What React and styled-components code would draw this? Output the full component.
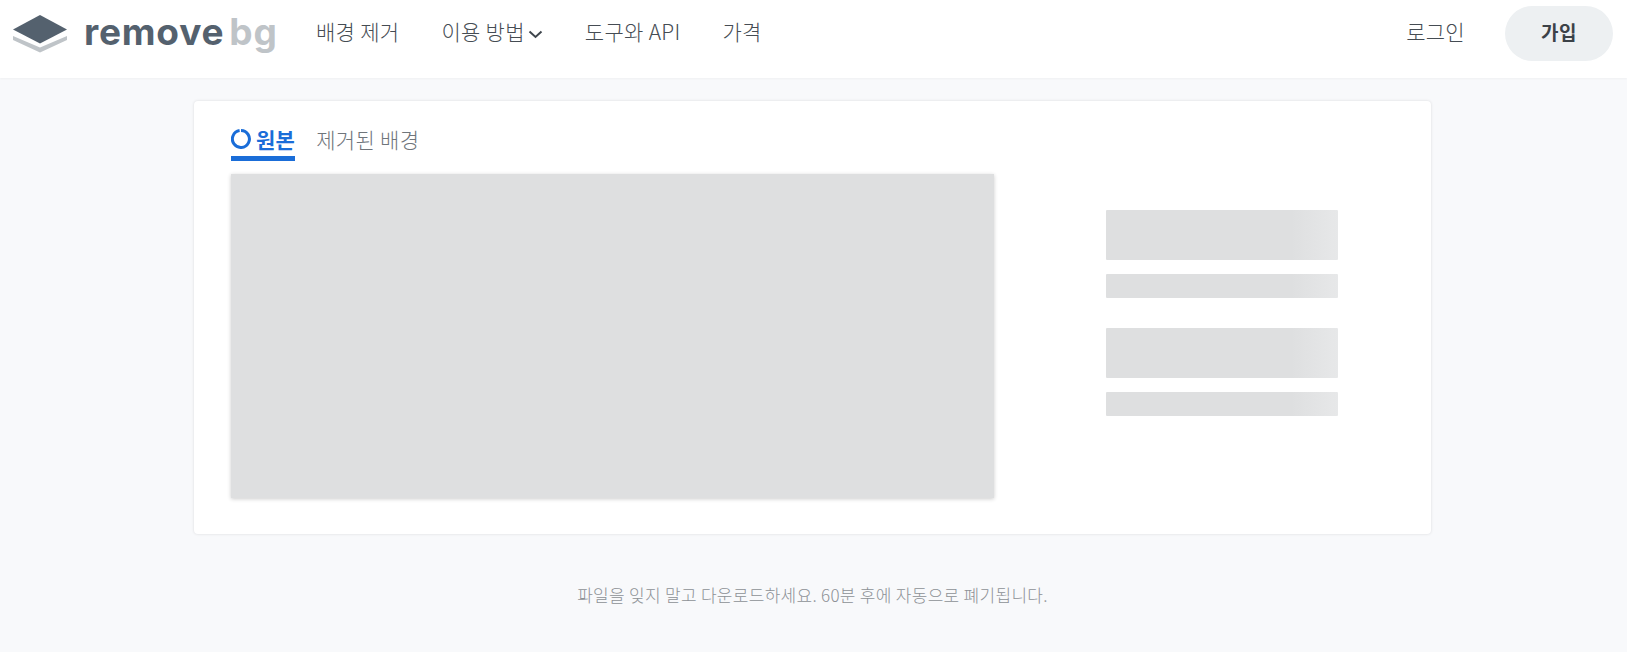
import React from "react";
import styled, { createGlobalStyle } from "styled-components";

const FONT = `"Noto Sans CJK KR", "Noto Sans", sans-serif`;

const GlobalStyle = createGlobalStyle`
  html, body {
    margin: 0;
    padding: 0;
    background: #f8f9fb;
    font-family: ${FONT};
  }
`;

const Page = styled.div`
  height: 652px;
  overflow: hidden;
`;

const Header = styled.header`
  display: flex;
  align-items: center;
  height: 78px;
  box-sizing: border-box;
  padding: 0 14px 11px 13px;
  background: #fff;
  box-shadow: 0 1px 2px rgba(0, 0, 0, 0.04);
`;

const Logo = styled.div`
  display: flex;
  align-items: center;
  gap: 17px;
  width: 303px;
  flex: none;
`;

const Wordmark = styled.div`
  display: flex;
  gap: 5px;
  margin-top: -3px;
  font-family: Inter, sans-serif;
  font-weight: 700;
  font-size: 37px;
  line-height: 44px;
  letter-spacing: 0.8px;
`;

const WordPart = styled.span`
  color: ${(p) => p.$color};
`;

const Nav = styled.nav`
  display: flex;
  align-items: center;
  gap: 42px;
  flex: 1;
`;

const NavItem = styled.a`
  display: flex;
  align-items: center;
  gap: 3px;
  margin-top: -5px;
  font-size: 21px;
  font-weight: 300;
  letter-spacing: 0.3px;
  line-height: 26px;
  color: #454c53;
  white-space: nowrap;
`;

const LoginLink = styled(NavItem)`
  margin-right: 40px;
`;

const SignupButton = styled.button`
  width: 108px;
  height: 55px;
  padding: 0 0 5px;
  border: 0;
  border-radius: 28px;
  background: #edf0f2;
  color: #3c4248;
  font-family: ${FONT};
  font-size: 19px;
  font-weight: 700;
  letter-spacing: 0.5px;
`;

const Main = styled.main`
  display: flex;
  flex-direction: column;
  align-items: center;
  padding: 23px 2px 0 0;
`;

const Card = styled.section`
  width: 1237px;
  height: 433px;
  box-sizing: border-box;
  padding: 20px 37px 0;
  background: #fff;
  border-radius: 4px;
  box-shadow: 0 0 3px rgba(0, 0, 0, 0.13);
`;

const Tabs = styled.div`
  display: flex;
  gap: 21px;
  height: 40px;
`;

const Tab = styled.div`
  display: flex;
  align-items: center;
  gap: 5px;
  height: 35px;
  font-size: 21px;
  line-height: 28px;
  letter-spacing: 0.3px;
  font-weight: ${(p) => (p.$active ? 700 : 300)};
  color: ${(p) => (p.$active ? "#1a6dd8" : "#6f757b")};
  border-bottom: 5px solid ${(p) => (p.$active ? "#1a6dd8" : "transparent")};
`;

const Content = styled.div`
  display: flex;
  margin-top: 13px;
`;

const Preview = styled.div`
  width: 763px;
  height: 324px;
  background: #dedfe0;
  box-shadow: 0 1px 4px rgba(0, 0, 0, 0.2);
`;

const SkeletonColumn = styled.div`
  display: flex;
  flex-direction: column;
  width: 232px;
  margin: 36px 0 0 112px;
`;

const SkeletonBar = styled.div`
  height: ${(p) => p.$height}px;
  margin-bottom: ${(p) => p.$gap}px;
  border-radius: 1px;
  background: linear-gradient(90deg, #dedfe0 0%, #dedfe0 80%, #e7e8e9 100%);
`;

const Notice = styled.p`
  margin: 50px 0 0;
  font-size: 17px;
  font-weight: 300;
  letter-spacing: 0.3px;
  line-height: 22px;
  color: #8d9196;
`;

const LogoIcon = () => (
  <svg width="54" height="39" viewBox="0 0 54 39">
    <path d="M0 22 L27 33.5 L54 22 L54 26 L27 38.5 L0 26 Z" fill="#bfc4c8" />
    <path d="M0 15.5 L27 1 L54 15.5 L27 29.5 Z" fill="#54616e" />
  </svg>
);

const Chevron = () => (
  <svg width="15" height="9" viewBox="0 0 15 9" style={{ marginTop: 6 }}>
    <path d="M1.5 1.5 L7.5 7 L13.5 1.5" fill="none" stroke="#3f464d" strokeWidth="2" />
  </svg>
);

const Spinner = () => (
  <svg width="20" height="20" viewBox="0 0 20 20">
    <path
      d="M10 1.5 A8.5 8.5 0 1 1 8.6 1.6"
      fill="none"
      stroke="#1a6dd8"
      strokeWidth="3"
    />
  </svg>
);

export default function App() {
  return (
    <Page>
      <GlobalStyle />
      <Header>
        <Logo>
          <LogoIcon />
          <Wordmark>
            <WordPart $color="#54616e">remove</WordPart>
            <WordPart $color="#bfc4c8">bg</WordPart>
          </Wordmark>
        </Logo>
        <Nav>
          <NavItem>배경 제거</NavItem>
          <NavItem>
            이용 방법
            <Chevron />
          </NavItem>
          <NavItem>도구와 API</NavItem>
          <NavItem>가격</NavItem>
        </Nav>
        <LoginLink>로그인</LoginLink>
        <SignupButton>가입</SignupButton>
      </Header>
      <Main>
        <Card>
          <Tabs>
            <Tab $active>
              <Spinner />
              원본
            </Tab>
            <Tab>제거된 배경</Tab>
          </Tabs>
          <Content>
            <Preview />
            <SkeletonColumn>
              <SkeletonBar $height={50} $gap={14} />
              <SkeletonBar $height={24} $gap={30} />
              <SkeletonBar $height={50} $gap={14} />
              <SkeletonBar $height={24} $gap={0} />
            </SkeletonColumn>
          </Content>
        </Card>
        <Notice>파일을 잊지 말고 다운로드하세요. 60분 후에 자동으로 폐기됩니다.</Notice>
      </Main>
    </Page>
  );
}
